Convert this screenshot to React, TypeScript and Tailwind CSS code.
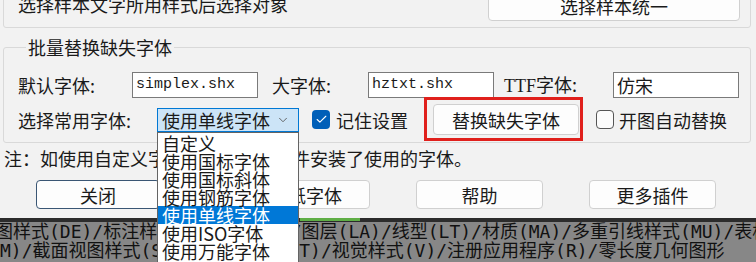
import { Check, ChevronDown } from 'lucide-react'

const options = ['自定义', '使用国标字体', '使用国标斜体', '使用钢筋字体', '使用单线字体', '使用ISO字体', '使用万能字体']

const TextBox = ({ value, cjk }: { value: string; cjk?: boolean }) => (
  <div
    className={`w-[126px] h-[26px] bg-white border border-[#7a7a7a] flex items-center pl-[3px] ${
      cjk ? 'text-[18px]' : "font-['Liberation_Mono',monospace] text-[15px]"
    }`}
  >
    {value}
  </div>
)

const Btn = ({ label, w, dark }: { label: string; w: string; dark?: boolean }) => (
  <button
    className={`${w} h-[29px] bg-[#fdfdfd] rounded-[4px] text-[18px] leading-none border ${
      dark ? 'border-[#3a5674]' : 'border-[#d0d0d0]'
    }`}
  >
    {label}
  </button>
)

export default function App() {
  return (
    <div className="w-[756px] h-[262px] overflow-hidden bg-[#f2f2f2] text-[#1a1a1a] font-['Noto_Sans_CJK_SC',sans-serif]">
      <div className="h-[218px] flex flex-col">
        {/* top group, cut by the window */}
        <div className="ml-[3px] mr-[5px] -mt-[14px] h-[42px] shrink-0 border border-[#d9d9d9] rounded-[3px] flex items-center justify-between pl-[14px] pr-[10px]">
          <span className="text-[18px] leading-[18px] -mt-[6px]">选择样本文字所用样式后选择对象</span>
          <button className="w-[252px] h-[29px] -mt-[2px] bg-[#fdfdfd] border border-[#d0d0d0] rounded-[4px] text-[18px] leading-none">
            选择样本统一
          </button>
        </div>

        <fieldset className="ml-[3px] mr-[5px] mt-[10px] border border-[#d9d9d9] rounded-[3px] pl-[14px] pb-[7px]">
          <legend className="ml-[8px] px-[2px] text-[18px] leading-[18px]">批量替换缺失字体</legend>
          <div className="mt-[16px] h-[26px] flex items-center text-[18px] leading-[18px]">
            <span className="w-[114px]">默认字体:</span>
            <TextBox value="simplex.shx" />
            <span className="ml-[14px] w-[96px]">大字体:</span>
            <TextBox value="hztxt.shx" />
            <span className="ml-[10px] w-[109px]">
              <span className="font-['Liberation_Serif',serif]">TTF</span>字体:
            </span>
            <TextBox value="仿宋" cjk />
          </div>
          <div className="mt-[6px] h-[31px] flex items-center text-[18px] leading-[18px]">
            <span className="w-[139px]">选择常用字体:</span>
            <div className="relative">
              <div className="w-[142px] h-[24px] bg-[#cce4f7] border border-[#0078d4] flex items-center pl-[4px]">
                <span>使用单线字体</span>
                <ChevronDown className="ml-auto mr-[8px] w-[14px] h-[14px] text-[#555]" strokeWidth={1.5} />
              </div>
              <ul className="absolute left-0 top-full w-[142px] h-[140px] bg-white border border-[#646464] pt-[1px] z-10">
                {options.map((o) => (
                  <li
                    key={o}
                    className={`h-[18px] leading-[18px] pl-[4px] text-[18px] ${
                      o === '使用单线字体' ? 'bg-[#0078d7] text-white' : ''
                    }`}
                  >
                    {o}
                  </li>
                ))}
              </ul>
            </div>
            <span className="ml-[13px] w-[18px] h-[19px] rounded-[4px] bg-[#005fb8] flex items-center justify-center">
              <Check className="w-[13px] h-[13px] text-white" strokeWidth={2} />
            </span>
            <span className="ml-[6px]">记住设置</span>
            <div className="relative ml-[25px]">
              <button className="w-[146px] h-[31px] bg-[#fdfdfd] border border-[#d0d0d0] rounded-[4px] text-[18px] leading-none">
                替换缺失字体
              </button>
              <div className="absolute -left-[9px] -top-[7px] w-[159px] h-[44px] border-[3px] border-[#e0201c]" />
            </div>
            <span className="ml-[17px] w-[18px] h-[19px] rounded-[4px] border border-[#555] bg-[#fbfbfb]" />
            <span className="ml-[5px]">开图自动替换</span>
          </div>
        </fieldset>

        <p className="mt-[6px] pl-[4px] text-[18px] leading-[18px] whitespace-nowrap">
          注：如使用自定义字体，请先确保插件安装了使用的字体。
        </p>
        <div className="mt-[13px] flex pl-[36px] gap-[46px]">
          <Btn label="关闭" w="w-[124px]" dark />
          <Btn label="替换图纸字体" w="w-[164px]" />
          <Btn label="帮助" w="w-[127px]" />
          <Btn label="更多插件" w="w-[127px]" />
        </div>
      </div>

      {/* command line behind the dialog */}
      <div className="h-[44px] bg-[#878787] flex flex-col text-[18px] leading-[19px] text-[#111] font-['DejaVu_Sans_Mono','Noto_Sans_CJK_SC',monospace]">
        <div className="h-[4px] shrink-0 bg-[#2c2c2c] flex">
          <div className="ml-[300px] w-[60px] h-[3px] bg-[#5fae45]" />
        </div>
        <div className="-ml-[5px] whitespace-nowrap">
          图样式(DE)/标注样式(DI)/组(GR)/图层(LA)/线型(LT)/材质(MA)/多重引线样式(MU)/表格样式(T)
        </div>
        <div className="whitespace-nowrap">
          M)/截面视图样式(SEV)/文字样式(ST)/视觉样式(V)/注册应用程序(R)/零长度几何图形
        </div>
      </div>
    </div>
  )
}
